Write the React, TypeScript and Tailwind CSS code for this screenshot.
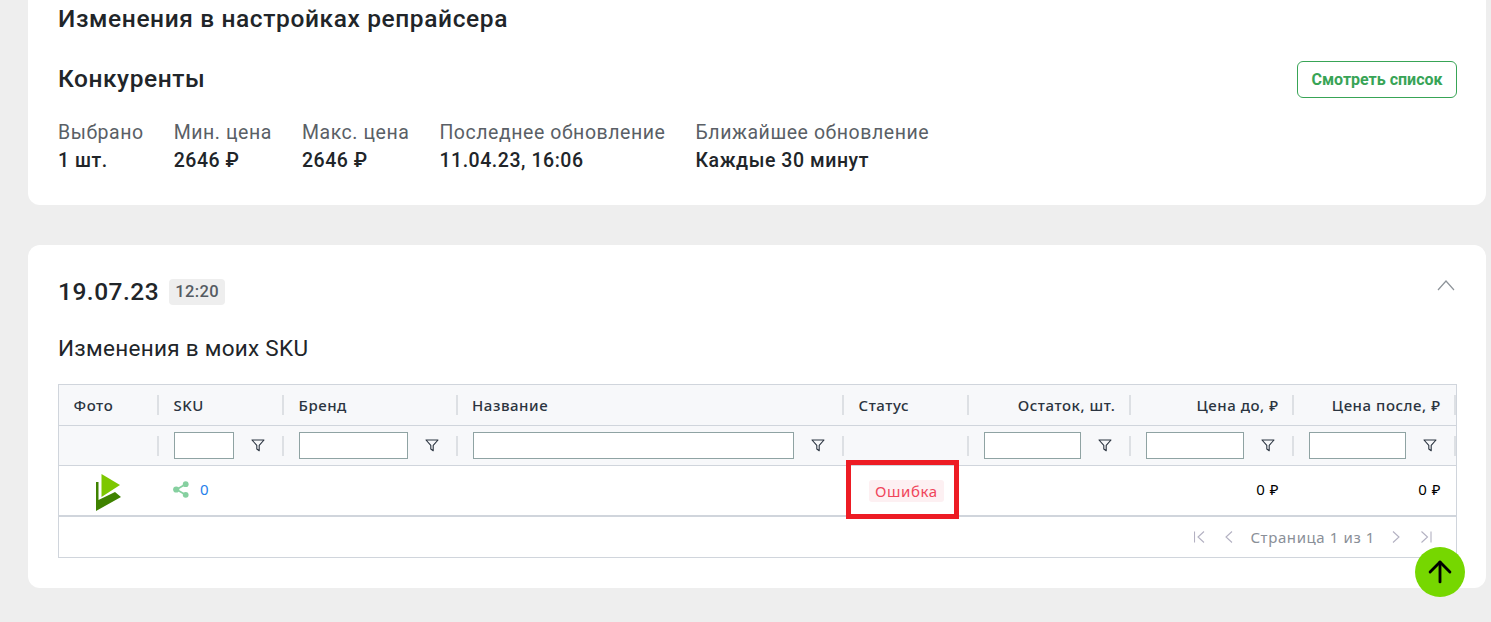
import { ArrowUp } from "lucide-react";

const roboto = "font-['Roboto',sans-serif]";

const columns = [
  { title: "Фото", width: "w-[100px]", filter: false, right: false },
  { title: "SKU", width: "w-[125px]", filter: true, right: false },
  { title: "Бренд", width: "w-[173.5px]", filter: true, right: false },
  { title: "Название", width: "w-[386.5px]", filter: true, right: false },
  { title: "Статус", width: "w-[125px]", filter: false, right: false },
  { title: "Остаток, шт.", width: "w-[162px]", filter: true, right: true },
  { title: "Цена до, ₽", width: "w-[163px]", filter: true, right: true },
  { title: "Цена после, ₽", width: "w-[162px]", filter: true, right: true },
];

const stats = [
  { label: "Выбрано", value: "1 шт." },
  { label: "Мин. цена", value: "2646 ₽" },
  { label: "Макс. цена", value: "2646 ₽" },
  { label: "Последнее обновление", value: "11.04.23, 16:06" },
  { label: "Ближайшее обновление", value: "Каждые 30 минут" },
];

const FilterIcon = () => (
  <svg width="14" height="13" viewBox="0 0 14 13" fill="none" stroke="#2b3440" strokeWidth="1.1" strokeLinejoin="round">
    <path d="M1 1h12L8.2 6.4v5.4L5.8 10V6.4z" />
  </svg>
);

const Logo = () => (
  <svg width="26" height="38" viewBox="0 0 26 38">
    <path d="M5.5 0 24 11 5.5 23z" fill="#7dc700" />
    <path d="M0 8h2.5v18L19 18l6 5L0 37z" fill="#3f8200" />
  </svg>
);

const ShareIcon = () => (
  <svg width="16" height="17" viewBox="0 0 16 17" fill="#86d0a0" stroke="#86d0a0">
    <path d="M12.5 3.2 3.5 8.5l9 5.3" fill="none" strokeWidth="1.7" />
    <circle cx="12.7" cy="3.2" r="2.9" stroke="none" />
    <circle cx="3.2" cy="8.5" r="3.1" stroke="none" />
    <circle cx="12.7" cy="13.8" r="2.9" stroke="none" />
  </svg>
);

const PagerIcon = ({ d, width }: { d: string; width: number }) => (
  <svg width={width} height="12" viewBox={`0 0 ${width} 12`} fill="none" stroke="#b3b1c2" strokeWidth="1.1">
    <path d={d} />
  </svg>
);

export default function App() {
  return (
    <div className="relative h-[622px] w-full overflow-hidden bg-[#eeeeee]">
      <div className="ml-[28px] mr-[5px] h-[205px] rounded-b-xl bg-white px-[30px] pt-[4px]">
        <h1 className={`${roboto} text-[24.5px] leading-[30px] font-medium tracking-[0.61px] text-[#212529]`}>
          Изменения в настройках репрайсера
        </h1>
        <div className="mt-[27px] mr-[-1px] flex items-center justify-between">
          <h2 className={`${roboto} pb-[2px] text-[24.5px] leading-[35px] font-medium tracking-[0.55px] text-[#212529]`}>Конкуренты</h2>
          <button className={`${roboto} h-[37px] w-[160px] rounded-md border border-[#38a456] bg-white text-[16px] font-bold text-[#38a456]`}>
            Смотреть список
          </button>
        </div>
        <div className={`${roboto} mt-[21px] flex gap-[30px] text-[19.5px] leading-[28px] tracking-[0.55px]`}>
          {stats.map((s) => (
            <div key={s.label}>
              <div className="text-[#5a5f66]">{s.label}</div>
              <div className="font-medium text-[#212529]">{s.value}</div>
            </div>
          ))}
        </div>
      </div>

      <div className="mt-[40px] ml-[28px] mr-[5px] h-[343px] rounded-xl bg-white px-[30px] pt-[31px]">
        <div className="flex items-start justify-between">
          <div className={`${roboto} flex items-center gap-[10px]`}>
            <span className="text-[24.5px] leading-[32px] font-medium tracking-[0.5px] text-[#212529]">19.07.23</span>
            <span className="rounded-[4px] bg-[#eeeeee] px-[6px] text-[16.5px] leading-[26px] font-medium tracking-[0.4px] text-[#555b62]">12:20</span>
          </div>
          <svg className="mt-[3px] mr-[1px]" width="18" height="12" viewBox="0 0 18 12" fill="none" stroke="#8d9399" strokeWidth="1.2">
            <path d="M1 11 9 2l8 9" />
          </svg>
        </div>
        <h3 className={`${roboto} mt-[25px] text-[22.5px] leading-[30px] tracking-[0.28px] text-[#212529]`}>Изменения в моих SKU</h3>

        <div className="mt-[21px] mr-[-1px] h-[174px] border border-[#d0d5dc] font-['Noto_Sans',sans-serif] text-[15px] tracking-[0.55px]">
          <div className="flex h-[40px] bg-[#f7f8fa]">
            {columns.map((c) => (
              <div key={c.title} className={`${c.width} flex items-center`}>
                <span className={`flex-1 pt-[1px] pl-[14.5px] pr-[13.5px] font-medium text-[#2b3440] ${c.right ? "text-right" : ""}`}>
                  {c.title}
                </span>
                <span className="h-[20px] w-[2px] bg-[#dde0e4]" />
              </div>
            ))}
          </div>
          <div className="flex h-[41px] border-y border-[#d0d5dc] bg-[#f7f8fa]">
            {columns.map((c) => (
              <div key={c.title} className={`${c.width} flex items-center`}>
                <div className="flex flex-1 items-center pl-[15px]">
                  {c.filter && (
                    <>
                      <span className="h-[27px] flex-1 border border-[#8fa3a3] bg-white" />
                      <span className="flex w-[48px] justify-center">
                        <FilterIcon />
                      </span>
                    </>
                  )}
                </div>
                <span className="h-[20px] w-[2px] bg-[#dde0e4]" />
              </div>
            ))}
          </div>
          <div className="flex h-[51px] border-b-2 border-[#d0d5dc]">
            <div className="flex w-[100px] items-center justify-center pt-[5px]">
              <Logo />
            </div>
            <div className="flex w-[125px] items-center gap-[11px] pl-[14px] pb-[3px]">
              <ShareIcon />
              <span className="text-[#2680eb]">0</span>
            </div>
            <div className="w-[173.5px]" />
            <div className="w-[386.5px]" />
            <div className="flex w-[125px] items-center pl-[25px] pt-[1px]">
              <span className="rounded-[3px] bg-[#fdf0f2] px-[6px] leading-[22px] tracking-[0.6px] text-[#f0455a]">Ошибка</span>
            </div>
            <div className="w-[162px]" />
            <div className="flex w-[163px] items-center justify-end pr-[15px] pb-[3px] text-black">0 ₽</div>
            <div className="flex w-[162px] items-center justify-end pr-[15px] pb-[3px] text-black">0 ₽</div>
          </div>
          <div className="flex h-[40px] items-center justify-end gap-[15px] pr-[23px] text-[#8a8f98]">
            <PagerIcon width={14} d="M.5.5v11M10 .5 4 6l6 5.5" />
            <PagerIcon width={12} d="M9 .5 3 6l6 5.5" />
            <span className="tracking-[0.6px]">Страница 1 из 1</span>
            <PagerIcon width={12} d="m3 .5 6 5.5-6 5.5" />
            <span className="ml-[2px] flex">
              <PagerIcon width={14} d="m2.5.5 6 5.5-6 5.5M12 .5v11" />
            </span>
          </div>
        </div>
      </div>

      {/* annotation frame around the status */}
      <div className="absolute top-[460px] left-[846px] h-[59px] w-[113px] border-[5px] border-[#ed1c24]" />

      <button className="absolute top-[547px] left-[1415px] flex h-[50px] w-[50px] items-center justify-center rounded-full bg-[#76d700]">
        <ArrowUp size={34} strokeWidth={2} color="#000" />
      </button>
    </div>
  );
}
